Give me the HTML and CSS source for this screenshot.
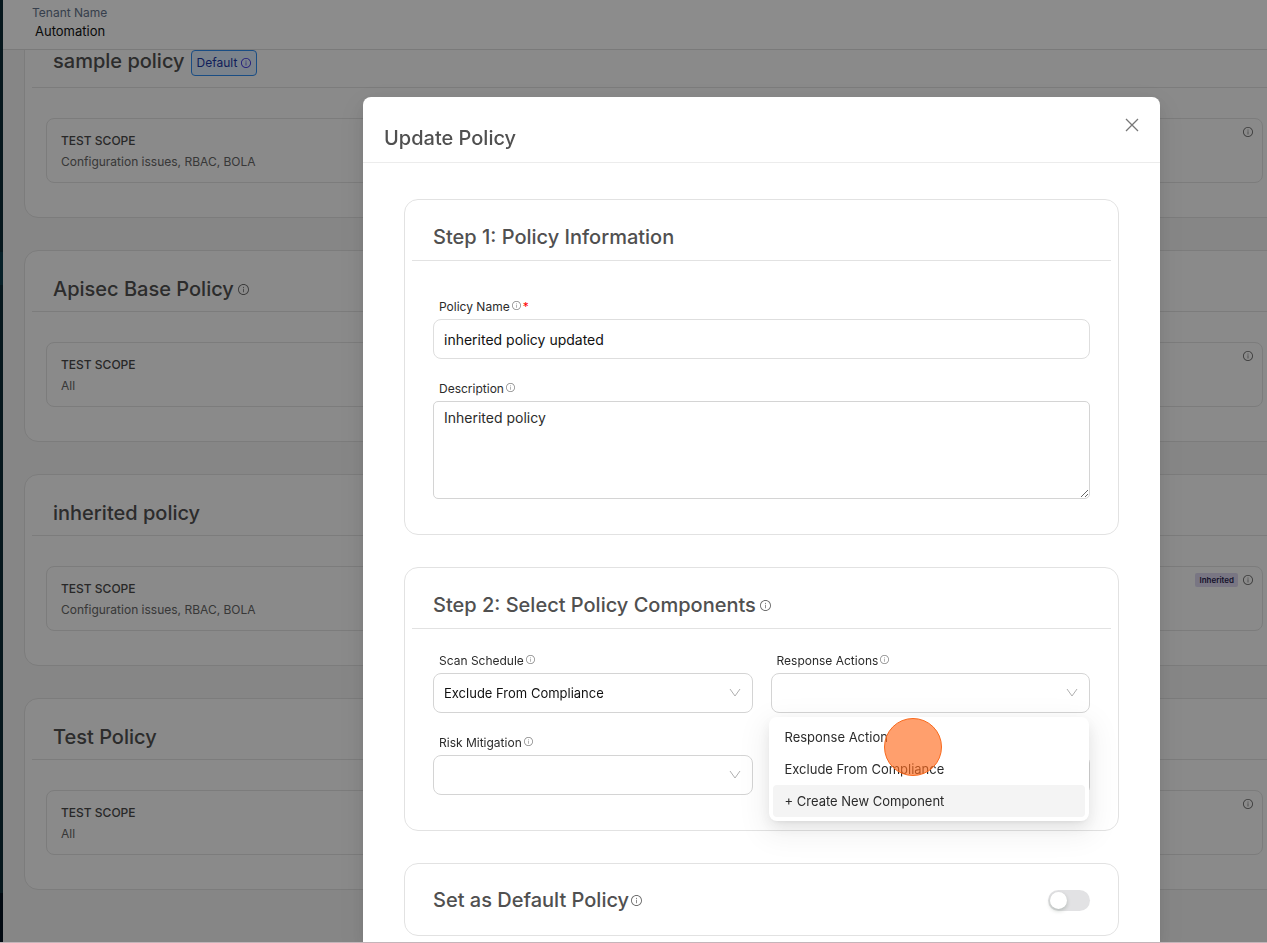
FILE: index.html
```html
<!DOCTYPE html>
<html lang="en">
<head>
<meta charset="utf-8">
<title>Update Policy</title>
<link rel="stylesheet" href="styles.css">
</head>
<body>
<svg class="sprite" aria-hidden="true">
  <symbol id="info" viewBox="64 64 896 896">
    <path d="M512 64C264.6 64 64 264.6 64 512s200.6 448 448 448 448-200.6 448-448S759.4 64 512 64zm0 820c-205.4 0-372-166.6-372-372s166.6-372 372-372 372 166.6 372 372-166.6 372-372 372z"/>
    <path d="M464 336a48 48 0 1096 0 48 48 0 10-96 0zm72 112h-48c-4.4 0-8 3.6-8 8v272c0 4.4 3.6 8 8 8h48c4.4 0 8-3.6 8-8V456c0-4.4-3.6-8-8-8z"/>
  </symbol>
  <symbol id="chevron" viewBox="0 0 12 12">
    <path d="M1 2 6 9l5-7" fill="none" stroke="currentColor"/>
  </symbol>
</svg>

<div class="app">
  <aside class="rail"></aside>
  <div class="page">
    <header class="topbar">
      <div class="tenant-label">Tenant Name</div>
      <div class="tenant-value">Automation</div>
    </header>
    <main class="policies">
      <section class="card">
        <div class="card-head tagged">
          <h2 class="title">sample policy</h2>
          <span class="tag-default">Default <svg class="icon"><use href="#info"/></svg></span>
        </div>
        <div class="scope">
          <div><h3 class="scope-name">TEST SCOPE</h3><p class="scope-value">Configuration issues, RBAC, BOLA</p></div>
          <div class="scope-side"><svg class="icon"><use href="#info"/></svg></div>
        </div>
      </section>
      <section class="card">
        <div class="card-head">
          <h2 class="title">Apisec Base Policy</h2>
          <svg class="icon"><use href="#info"/></svg>
        </div>
        <div class="scope">
          <div><h3 class="scope-name">TEST SCOPE</h3><p class="scope-value">All</p></div>
          <div class="scope-side"><svg class="icon"><use href="#info"/></svg></div>
        </div>
      </section>
      <section class="card">
        <div class="card-head">
          <h2 class="title">inherited policy</h2>
        </div>
        <div class="scope">
          <div><h3 class="scope-name">TEST SCOPE</h3><p class="scope-value">Configuration issues, RBAC, BOLA</p></div>
          <div class="scope-side"><span class="tag-inherited">Inherited</span><svg class="icon"><use href="#info"/></svg></div>
        </div>
      </section>
      <section class="card">
        <div class="card-head">
          <h2 class="title">Test Policy</h2>
        </div>
        <div class="scope">
          <div><h3 class="scope-name">TEST SCOPE</h3><p class="scope-value">All</p></div>
          <div class="scope-side"><svg class="icon"><use href="#info"/></svg></div>
        </div>
      </section>
    </main>
  </div>
</div>

<div class="overlay">
  <div class="modal" role="dialog" aria-labelledby="modal-title">
    <header class="modal-head">
      <h1 class="title" id="modal-title">Update Policy</h1>
      <button class="close" type="button" aria-label="Close">
        <svg viewBox="0 0 14 14"><path d="m1 1 12 12M13 1 1 13"/></svg>
      </button>
    </header>
    <form class="modal-body">
      <section class="panel">
        <div class="card-head"><h2 class="title">Step 1: Policy Information</h2></div>
        <div class="fields">
          <div class="field">
            <label for="name">Policy Name <svg class="icon"><use href="#info"/></svg><span class="required">*</span></label>
            <input class="control" id="name" type="text" value="inherited policy updated">
          </div>
          <div class="field">
            <label for="description">Description <svg class="icon"><use href="#info"/></svg></label>
            <textarea class="control area" id="description">Inherited policy</textarea>
          </div>
        </div>
      </section>

      <section class="panel">
        <div class="card-head"><h2 class="title">Step 2: Select Policy Components</h2><svg class="icon"><use href="#info"/></svg></div>
        <div class="fields pair">
          <div class="field">
            <label for="schedule">Scan Schedule <svg class="icon"><use href="#info"/></svg></label>
            <div class="select">
              <select class="control" id="schedule"><option>Exclude From Compliance</option></select>
              <svg class="arrow"><use href="#chevron"/></svg>
            </div>
          </div>
          <div class="field">
            <label for="actions">Response Actions <svg class="icon"><use href="#info"/></svg></label>
            <div class="select">
              <select class="control" id="actions"><option></option></select>
              <svg class="arrow"><use href="#chevron"/></svg>
              <ul class="menu" role="listbox" aria-label="Response Actions">
                <li role="option">Response Action</li>
                <li role="option">Exclude From Compliance</li>
                <li role="option" class="active">+ Create New Component</li>
                <li class="pointer" role="presentation"></li>
              </ul>
            </div>
          </div>
          <div class="field">
            <label for="risk">Risk Mitigation <svg class="icon"><use href="#info"/></svg></label>
            <div class="select">
              <select class="control" id="risk"><option></option></select>
              <svg class="arrow"><use href="#chevron"/></svg>
            </div>
          </div>
          <div class="field last">
            <div class="select">
              <select class="control" aria-label="Component"><option></option></select>
            </div>
          </div>
        </div>
      </section>

      <section class="panel default-row">
        <label class="title" for="default">Set as Default Policy</label>
        <svg class="icon"><use href="#info"/></svg>
        <input class="switch" id="default" type="checkbox" role="switch">
      </section>
    </form>
  </div>
</div>
</body>
</html>
```
FILE: styles.css
```css
* { box-sizing: border-box; }

body {
  margin: 0;
  height: 100vh;
  overflow: hidden;
  border-bottom: 1px solid #c4b5ba;
  font-family: Inter, "Open Sans", sans-serif;
  font-size: 13px;
  color: #2b2b2b;
  background: #f5f5f5;
}

h1, h2, h3, p, ul { margin: 0; padding: 0; font-weight: 400; }

.sprite { position: absolute; width: 0; height: 0; }

.icon {
  flex: none;
  width: 11px;
  height: 11px;
  fill: #707070;
}

.title {
  font-size: 20px;
  line-height: 32px;
  font-weight: 500;
  color: #505050;
}

/* Page behind the dialog */
.app { display: flex; height: 100%; overflow: hidden; }

.rail {
  flex: none;
  width: 3px;
  background: linear-gradient(#0b2a35 0 252px, #0c3b4a 252px 285px, #0b2a35 285px 893px, #04121f 893px);
}

.page { flex: 1; min-width: 0; display: flex; flex-direction: column; }

.topbar {
  z-index: 1;
  flex: none;
  height: 50px;
  padding: 4px 29px;
  line-height: 18px;
  background: #fff;
  border-bottom: 1px solid #dedede;
}

.tenant-label { font-size: 12px; color: #64748b; }
.tenant-value { padding-left: 3px; color: #111; }

.policies {
  display: flex;
  flex-direction: column;
  gap: 32px;
  margin: -24px -18px 0 21px;
}

.card, .panel {
  flex: none;
  border: 1px solid #e2e2e2;
  border-radius: 14px;
}

.card { padding-bottom: 34px; background: #fbfbfb; }

.card-head {
  display: flex;
  align-items: center;
  gap: 4px;
  margin: 0 7px;
  padding: 22px 21px 6px;
  border-bottom: 1px solid #e2e2e2;
}

.panel .card-head { padding: 21px 21px 7px; }
.card-head.tagged { gap: 6px; padding: 18px 21px 10px; }

.tag-default {
  display: flex;
  align-items: center;
  gap: 4px;
  margin-top: 4px;
  padding: 0 5px;
  font-size: 12px;
  line-height: 24px;
  color: #1d39a4;
  background: #e0efff;
  border: 1px solid #2f8cf0;
  border-radius: 4px;
}

.tag-default .icon { width: 10px; height: 10px; fill: #4338e0; }

.scope {
  display: flex;
  justify-content: space-between;
  margin: 30px 21px 0;
  padding: 11px 9px 10px 14px;
  line-height: 21px;
  border: 1px solid #e2e2e2;
  border-radius: 8px;
}

.scope-name { font-size: 12px; line-height: 21px; font-weight: 500; color: #4a4a4a; }
.scope-value { font-size: 12px; color: #666; }

.scope-side { display: flex; align-items: center; gap: 5px; height: 4px; }
.scope-side .icon { width: 10px; height: 10px; }

.tag-inherited {
  padding: 0 4px;
  font-size: 8px;
  line-height: 14px;
  font-weight: 600;
  color: #2b2350;
  background: #dcd8ee;
  border-radius: 2px;
}

/* Dialog */
.overlay {
  position: fixed;
  z-index: 2;
  inset: 0 0 1px;
  display: flex;
  padding: 97px 107px 0 363px;
  overflow: hidden;
  background: rgba(0, 0, 0, 0.45);
}

.modal {
  flex: 1;
  min-width: 0;
  background: #fff;
  border-radius: 8px 8px 0 0;
  box-shadow: 0 6px 16px rgba(0, 0, 0, 0.08), 0 3px 6px -4px rgba(0, 0, 0, 0.12), 0 9px 28px 8px rgba(0, 0, 0, 0.05);
}

.modal-head {
  display: flex;
  justify-content: space-between;
  align-items: flex-start;
  padding: 25px 21px 8px;
  border-bottom: 1px solid #ececec;
}

.close {
  width: 14px;
  height: 14px;
  margin-top: -4px;
  padding: 0;
  border: 0;
  background: none;
}

.close svg { display: block; fill: none; stroke: #777; stroke-width: 1.3; }

.modal-body {
  display: flex;
  flex-direction: column;
  gap: 32px;
  padding: 36px 41px;
}

.panel { background: #fff; }

.fields {
  display: grid;
  gap: 20px 18px;
  padding: 36px 28px 35px;
}

.fields.pair { grid-template-columns: 1fr 1fr; padding-top: 22px; }

.field { min-width: 0; }
.field.last { align-self: end; }

.field label {
  display: flex;
  gap: 2px;
  margin: 0 6px 2px;
  font-size: 12px;
  line-height: 20px;
}

.field label .icon { width: 9px; height: 9px; margin-top: 4px; fill: #888; }

.required { color: #f00; }

.control {
  display: block;
  width: 100%;
  height: 40px;
  padding: 0 10px;
  font: inherit;
  font-size: 14px;
  color: #111;
  background: #fff;
  border: 1px solid #dedede;
  border-radius: 8px;
  outline: 0;
}

.area {
  height: 98px;
  padding: 6px 10px;
  line-height: 20px;
  color: #2b2b2b;
  border-color: #d4d4d4;
  border-radius: 5px;
}

.select { position: relative; }
.select .control { appearance: none; font-size: 13px; border-color: #d4d4d4; }

.arrow {
  position: absolute;
  top: 14px;
  right: 12px;
  width: 12px;
  height: 12px;
  color: #b0b0b0;
  pointer-events: none;
}

.menu {
  position: absolute;
  z-index: 1;
  top: calc(100% + 4px);
  left: -2px;
  right: 1px;
  padding: 4px;
  list-style: none;
  line-height: 32px;
  background: #fff;
  border-radius: 8px;
  box-shadow: 0 6px 16px rgba(0, 0, 0, 0.08), 0 3px 6px -4px rgba(0, 0, 0, 0.12), 0 9px 28px 8px rgba(0, 0, 0, 0.05);
}

.menu li { padding: 0 12px; border-radius: 4px; }
.menu .active { background: #f4f4f4; }

.menu .pointer {
  position: absolute;
  top: 1px;
  left: 115px;
  width: 58px;
  height: 58px;
  padding: 0;
  background: rgba(255, 107, 31, 0.65);
  border: 1px solid #f9691c;
  border-radius: 50%;
}

.default-row {
  display: flex;
  align-items: center;
  gap: 2px;
  padding: 20px 28px 19px;
}

.switch {
  appearance: none;
  width: 42px;
  height: 21px;
  margin: 0 0 0 auto;
  padding: 2px;
  background: #e2e2e4;
  border-radius: 11px;
}

.switch::before {
  content: "";
  display: block;
  width: 17px;
  height: 17px;
  background: #fff;
  border-radius: 50%;
  box-shadow: 0 2px 4px rgba(0, 35, 11, 0.2);
}
```
